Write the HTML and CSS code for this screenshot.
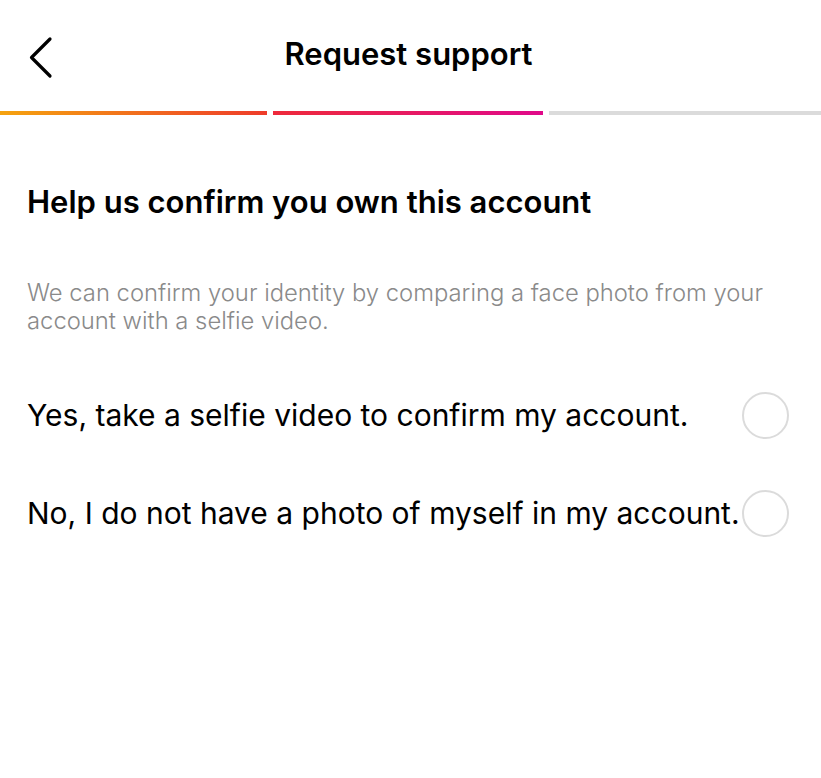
FILE: index.html
```html
<!DOCTYPE html>
<html>
<head>
<meta charset="utf-8">
<link rel="stylesheet" href="styles.css">
</head>
<body>
<div class="page">
  <header class="topbar">
    <button class="back" aria-label="Back">
      <svg width="30" height="44" viewBox="0 0 30 44"><path d="M23 3 L4.5 21.5 L23 40" fill="none" stroke="#000" stroke-width="3.2" stroke-linecap="round" stroke-linejoin="round"/></svg>
    </button>
    <h1 class="title">Request support</h1>
  </header>
  <div class="progress">
    <div class="seg seg1"></div>
    <div class="seg seg2"></div>
    <div class="seg seg3"></div>
  </div>
  <main class="content">
    <h2 class="heading">Help us confirm you own this account</h2>
    <p class="desc">We can confirm your identity by comparing a face photo from your account with a selfie video.</p>
    <ul class="options">
      <li class="option"><span class="opt-text">Yes, take a selfie video to confirm my account.</span><span class="radio"></span></li>
      <li class="option"><span class="opt-text">No, I do not have a photo of myself in my account.</span><span class="radio"></span></li>
    </ul>
  </main>
</div>
</body>
</html>
```
FILE: styles.css
```css
* { box-sizing: border-box; }
html, body { margin: 0; padding: 0; background: #fff; }
body { font-family: Inter, "Noto Sans", "Liberation Sans", sans-serif; color: #000; }
.page { width: 821px; }
.topbar {
  position: relative;
  height: 111px;
  display: flex;
  align-items: flex-start;
  justify-content: center;
  padding-right: 4px;
}
.back {
  position: absolute;
  left: 27px;
  top: 36px;
  border: 0;
  background: none;
  padding: 0;
  line-height: 0;
}
.title {
  margin: 36px 0 0;
  font-size: 31px;
  font-weight: 600;
  line-height: 36px;
}
.progress {
  display: flex;
  gap: 6px;
  height: 4px;
}
.seg { height: 4px; }
.seg1 { flex: 267; background: linear-gradient(90deg, #f5a30f, #ee3b2a); }
.seg2 { flex: 270; background: linear-gradient(90deg, #ee2a3a, #e0098a); }
.seg3 { flex: 272; background: #dbdbdb; }
.content { padding: 69px 27px 0 27px; }
.heading {
  margin: 0;
  font-size: 31px;
  font-weight: 600;
  line-height: 36px;
}
.desc {
  margin: 59px -20px 0 0;
  font-size: 23.8px;
  line-height: 28px;
  color: #8a8a8a;
  font-weight: 300;
}
.options { list-style: none; margin: 31px 0 0; padding: 0; }
.option {
  display: flex;
  align-items: center;
  justify-content: space-between;
  height: 98px;
  padding-right: 5px;
}
.opt-text { font-size: 30px; line-height: 36px; }
.radio {
  width: 47px; height: 47px;
  border: 2.5px solid #dbdbdb;
  border-radius: 50%;
  flex: none;
}
```
